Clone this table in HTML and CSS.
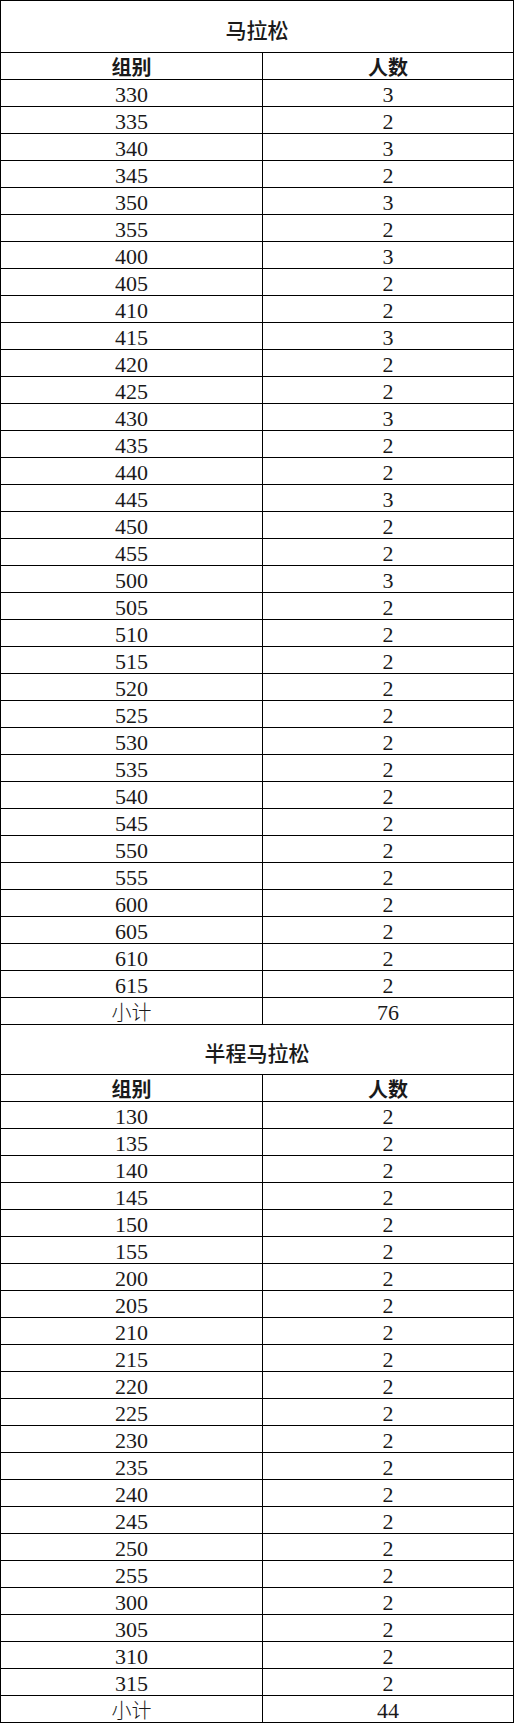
FILE: index.html
```html
<!DOCTYPE html>
<html lang="zh">
<head>
<meta charset="utf-8">
<link rel="stylesheet" href="styles.css">
</head>
<body>
<div class="sheet">
  <div class="title t1">马拉松</div>
  <div class="row head"><div class="c">组别</div><div class="c">人数</div></div>
  <div class="row"><div class="c">330</div><div class="c">3</div></div>
  <div class="row"><div class="c">335</div><div class="c">2</div></div>
  <div class="row"><div class="c">340</div><div class="c">3</div></div>
  <div class="row"><div class="c">345</div><div class="c">2</div></div>
  <div class="row"><div class="c">350</div><div class="c">3</div></div>
  <div class="row"><div class="c">355</div><div class="c">2</div></div>
  <div class="row"><div class="c">400</div><div class="c">3</div></div>
  <div class="row"><div class="c">405</div><div class="c">2</div></div>
  <div class="row"><div class="c">410</div><div class="c">2</div></div>
  <div class="row"><div class="c">415</div><div class="c">3</div></div>
  <div class="row"><div class="c">420</div><div class="c">2</div></div>
  <div class="row"><div class="c">425</div><div class="c">2</div></div>
  <div class="row"><div class="c">430</div><div class="c">3</div></div>
  <div class="row"><div class="c">435</div><div class="c">2</div></div>
  <div class="row"><div class="c">440</div><div class="c">2</div></div>
  <div class="row"><div class="c">445</div><div class="c">3</div></div>
  <div class="row"><div class="c">450</div><div class="c">2</div></div>
  <div class="row"><div class="c">455</div><div class="c">2</div></div>
  <div class="row"><div class="c">500</div><div class="c">3</div></div>
  <div class="row"><div class="c">505</div><div class="c">2</div></div>
  <div class="row"><div class="c">510</div><div class="c">2</div></div>
  <div class="row"><div class="c">515</div><div class="c">2</div></div>
  <div class="row"><div class="c">520</div><div class="c">2</div></div>
  <div class="row"><div class="c">525</div><div class="c">2</div></div>
  <div class="row"><div class="c">530</div><div class="c">2</div></div>
  <div class="row"><div class="c">535</div><div class="c">2</div></div>
  <div class="row"><div class="c">540</div><div class="c">2</div></div>
  <div class="row"><div class="c">545</div><div class="c">2</div></div>
  <div class="row"><div class="c">550</div><div class="c">2</div></div>
  <div class="row"><div class="c">555</div><div class="c">2</div></div>
  <div class="row"><div class="c">600</div><div class="c">2</div></div>
  <div class="row"><div class="c">605</div><div class="c">2</div></div>
  <div class="row"><div class="c">610</div><div class="c">2</div></div>
  <div class="row"><div class="c">615</div><div class="c">2</div></div>
  <div class="row"><div class="c cjk">小计</div><div class="c">76</div></div>

  <div class="title t2">半程马拉松</div>
  <div class="row head"><div class="c">组别</div><div class="c">人数</div></div>
  <div class="row"><div class="c">130</div><div class="c">2</div></div>
  <div class="row"><div class="c">135</div><div class="c">2</div></div>
  <div class="row"><div class="c">140</div><div class="c">2</div></div>
  <div class="row"><div class="c">145</div><div class="c">2</div></div>
  <div class="row"><div class="c">150</div><div class="c">2</div></div>
  <div class="row"><div class="c">155</div><div class="c">2</div></div>
  <div class="row"><div class="c">200</div><div class="c">2</div></div>
  <div class="row"><div class="c">205</div><div class="c">2</div></div>
  <div class="row"><div class="c">210</div><div class="c">2</div></div>
  <div class="row"><div class="c">215</div><div class="c">2</div></div>
  <div class="row"><div class="c">220</div><div class="c">2</div></div>
  <div class="row"><div class="c">225</div><div class="c">2</div></div>
  <div class="row"><div class="c">230</div><div class="c">2</div></div>
  <div class="row"><div class="c">235</div><div class="c">2</div></div>
  <div class="row"><div class="c">240</div><div class="c">2</div></div>
  <div class="row"><div class="c">245</div><div class="c">2</div></div>
  <div class="row"><div class="c">250</div><div class="c">2</div></div>
  <div class="row"><div class="c">255</div><div class="c">2</div></div>
  <div class="row"><div class="c">300</div><div class="c">2</div></div>
  <div class="row"><div class="c">305</div><div class="c">2</div></div>
  <div class="row"><div class="c">310</div><div class="c">2</div></div>
  <div class="row"><div class="c">315</div><div class="c">2</div></div>
  <div class="row"><div class="c cjk">小计</div><div class="c">44</div></div>
</div>
</body>
</html>
```

FILE: styles.css
```css
html, body {
  margin: 0;
  padding: 0;
  background: #fff;
}

.sheet {
  width: 514px;
  border-top: 1px solid #000;
  border-left: 1px solid #000;
  box-sizing: border-box;
  font-family: "Liberation Serif", "Noto Sans CJK SC", serif;
  color: #1a1a1a;
}

.title {
  display: flex;
  align-items: center;
  justify-content: center;
  border-right: 1px solid #000;
  border-bottom: 1px solid #000;
  box-sizing: border-box;
  font-family: "Noto Sans CJK SC", sans-serif;
  font-weight: 500;
  font-size: 21px;
  padding-top: 4px;
}

.t1 { height: 52px; }
.t2 { height: 50px; }

.row {
  display: grid;
  grid-template-columns: 262px 251px;
  height: 27px;
}

.c {
  display: flex;
  align-items: center;
  justify-content: center;
  border-right: 1px solid #000;
  border-bottom: 1px solid #000;
  box-sizing: border-box;
  font-size: 22px;
  line-height: 1;
  padding-top: 3px;
}

.head .c {
  font-family: "Noto Sans CJK SC", sans-serif;
  font-weight: 700;
  font-size: 20px;
  padding-top: 1px;
}

.c.cjk {
  font-family: "Noto Sans CJK SC", sans-serif;
  font-weight: 300;
  font-size: 20px;
  padding-top: 1px;
}
```
